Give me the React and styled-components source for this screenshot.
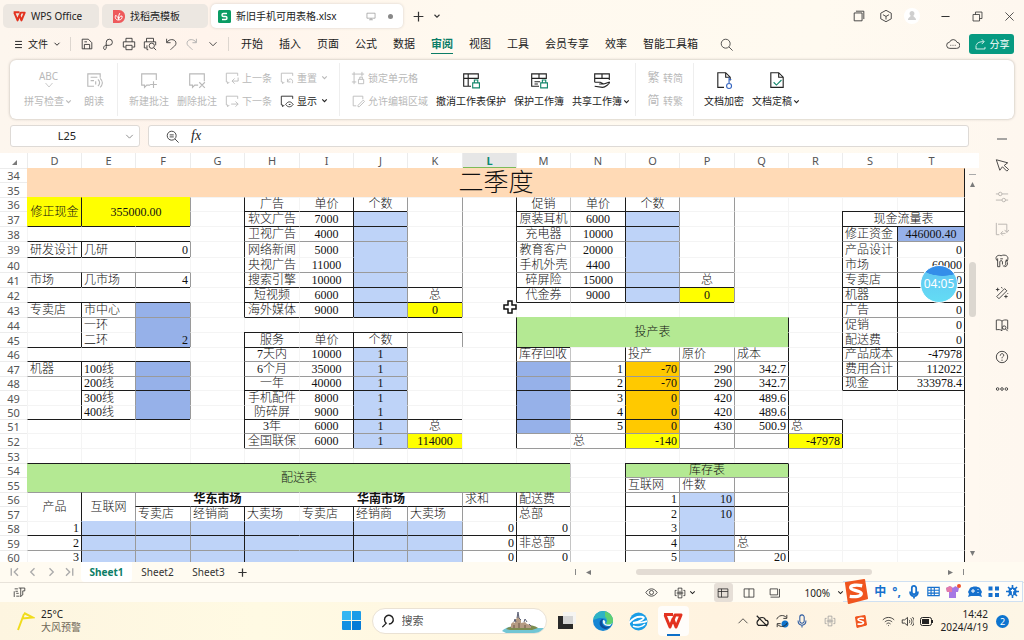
import React from "react";
import styled, { createGlobalStyle } from "styled-components";

const DARK = "#1c1c1c";
const GREY = "#9a9a9a";
const FAINT = "#f4f4f4";
const YELLOW = "#ffff00";
const SKY = "#bed3f8";
const BLUE = "#96b1e9";
const GREEN = "#b4e993";
const ORANGE = "#ffc900";
const PEACH = "#ffdab6";

/* ---------- sheet data ---------- */

const columns = [
  ["D", 54], ["E", 54], ["F", 55], ["G", 54], ["H", 55], ["I", 54],
  ["J", 54], ["K", 55], ["L", 54], ["M", 54], ["N", 55], ["O", 54],
  ["P", 55], ["Q", 54], ["R", 54], ["S", 55], ["T", 68],
];

const rowHeights = [
  14, 15, 14, 15, 15, 16, 15, 15, 15, 15, 15, 15, 14, 15,
  14, 15, 14, 14, 15, 15, 14, 15, 14, 15, 14, 15, 14,
];

const FIRST_ROW = 34;

// ink used for the top line of a row / the left line of a column inside a box
const rowInk = {
  37: DARK, 38: DARK, 39: GREY, 41: GREY, 42: DARK, 43: DARK, 44: GREY,
  46: DARK, 47: GREY, 48: GREY, 49: DARK, 51: DARK, 52: GREY, 53: GREY,
  54: DARK, 55: GREY, 56: GREY, 57: DARK, 59: DARK, 60: GREY,
};
const colInk = {
  E: DARK, F: GREY, G: GREY, H: DARK, J: DARK, K: GREY, L: GREY, M: DARK,
  N: "#c4c4c4", O: DARK, P: GREY, Q: GREY, R: DARK, S: DARK, T: DARK,
};

const boxes = [
  "D36:F37", "D39:F39", "D41:F41", "D43:F45", "D47:F50", "H36:J43",
  "K42:K43", "H45:J52", "K51:K52", "M36:O42", "P41:P42", "M44:Q52",
  "R51:R52", "S37:T48", "D54:M55", "D56:M60", "O54:Q60",
];

const topLines = [
  ["D39:F40", DARK], ["D47:F47", DARK], ["D49:D49", null],
  ["H44:K44", DARK], ["H45:K45", DARK], ["M44:Q44", null], ["N46:Q46", null],
];
const leftLines = [
  ["L36:L41", GREY], ["L45:L45", GREY], ["L51:L52", null],
  ["Q36:Q40", GREY], ["N52:N52", null],
];

const fills = [
  ["D34:T35", PEACH], ["D36:F37", YELLOW], ["F43:F45", BLUE],
  ["F47:F50", BLUE], ["J37:J43", SKY], ["K43:K43", YELLOW],
  ["J46:J52", SKY], ["K52:K52", YELLOW], ["O37:O42", SKY],
  ["P42:P42", YELLOW], ["M44:Q45", GREEN], ["M47:M51", BLUE],
  ["O47:O51", ORANGE], ["O52:O52", YELLOW], ["R52:R52", YELLOW],
  ["T38:T38", BLUE], ["D54:M55", GREEN], ["E58:K60", SKY],
  ["O54:Q54", GREEN], ["P56:P60", SKY],
];

const merges = [
  "D34:T35", "D36:D37", "E36:F37", "S37:T37", "M44:Q45", "D54:M55",
  "D56:D57", "E56:E57", "F56:H56", "I56:K56", "O54:Q54",
];

const centered = ["H36:K52", "M36:P42", "T38:T38"];
const bold = ["F56:K56"];

// each block is written from its top left cell
const blocks = {
  D34: [["二季度"]],
  D36: [["修正现金", "355000.00"]],
  D39: [["研发设计", "几研", "0"]],
  D41: [["市场", "几市场", "4"]],
  D43: [["专卖店", "市中心"], ["", "一环"], ["", "二环", "2"]],
  D47: [["机器", "100线"], ["", "200线"], ["", "300线"], ["", "400线"]],
  H36: [
    ["广告", "单价", "个数"],
    ["软文广告", "7000"],
    ["卫视广告", "4000"],
    ["网络新闻", "5000"],
    ["央视广告", "11000"],
    ["搜索引擎", "10000"],
    ["短视频", "6000", "", "总"],
    ["海外媒体", "9000", "", "0"],
  ],
  H45: [
    ["服务", "单价", "个数"],
    ["7天内", "10000", "1"],
    ["6个月", "35000", "1"],
    ["一年", "40000", "1"],
    ["手机配件", "8000", "1"],
    ["防碎屏", "9000", "1"],
    ["3年", "6000", "1", "总"],
    ["全国联保", "6000", "1", "114000"],
  ],
  M36: [
    ["促销", "单价", "个数"],
    ["原装耳机", "6000"],
    ["充电器", "10000"],
    ["教育客户", "20000"],
    ["手机外壳", "4400"],
    ["碎屏险", "15000", "", "总"],
    ["代金券", "9000", "", "0"],
  ],
  M44: [["投产表"]],
  M46: [
    ["库存回收", "", "投产", "原价", "成本"],
    ["", "1", "-70", "290", "342.7"],
    ["", "2", "-70", "290", "342.7"],
    ["", "3", "0", "420", "489.6"],
    ["", "4", "0", "420", "489.6"],
    ["", "5", "0", "430", "500.9", "总"],
    ["", "总", "-140", "", "", "-47978"],
  ],
  S37: [
    ["现金流量表"],
    ["修正资金", "446000.40"],
    ["产品设计", "0"],
    ["市场", "60000"],
    ["专卖店", "0"],
    ["机器", "0"],
    ["广告", "0"],
    ["促销", "0"],
    ["配送费", "0"],
    ["产品成本", "-47978"],
    ["费用合计", "112022"],
    ["现金", "333978.4"],
  ],
  D54: [["配送表"]],
  D56: [
    ["产品", "互联网", "华东市场", "", "", "华南市场", "", "", "求和", "配送费"],
    ["", "", "专卖店", "经销商", "大卖场", "专卖店", "经销商", "大卖场", "", "总部"],
    ["1", "", "", "", "", "", "", "", "0", "0"],
    ["2", "", "", "", "", "", "", "", "0", "非总部"],
    ["3", "", "", "", "", "", "", "", "0", "0"],
  ],
  O54: [
    ["库存表"],
    ["互联网", "件数"],
    ["1", "10"],
    ["2", "10"],
    ["3"],
    ["4", "", "总"],
    ["5", "", "20"],
  ],
};

const parseRef = ref => [ref.charCodeAt(0) - 68, Number(ref.slice(1))];
const parseRange = range => {
  const [c1, r1] = parseRef(range.slice(0, 3));
  const [c2, r2] = parseRef(range.slice(4));
  return { c1, r1, c2, r2 };
};

const buildSheet = () => {
  const cells = {};
  const at = (c, r) => (cells[`${c}-${r}`] = cells[`${c}-${r}`] || {});
  const each = (range, fn) => {
    const { c1, r1, c2, r2 } = parseRange(range);
    for (let r = r1; r <= r2; r++) {
      for (let c = c1; c <= c2; c++) fn(at(c, r), c, r);
    }
  };

  boxes.forEach(range => {
    const { c1, r1, c2, r2 } = parseRange(range);
    for (let c = c1; c <= c2; c++) {
      for (let r = r1; r <= r2 + 1; r++) at(c, r).top = rowInk[r];
    }
    for (let r = r1; r <= r2; r++) {
      for (let c = c1; c <= c2 + 1; c++) {
        at(c, r).left = colInk[String.fromCharCode(68 + c)];
      }
    }
  });
  topLines.forEach(([range, ink]) => each(range, cell => (cell.top = ink)));
  leftLines.forEach(([range, ink]) => each(range, cell => (cell.left = ink)));
  fills.forEach(([range, fill]) => each(range, cell => (cell.fill = fill)));
  centered.forEach(range => each(range, cell => (cell.align = "center")));
  bold.forEach(range => each(range, cell => (cell.bold = true)));

  Object.entries(blocks).forEach(([ref, rows]) => {
    const [c, r] = parseRef(ref);
    rows.forEach((row, i) =>
      row.forEach((text, j) => (at(c + j, r + i).text = text))
    );
  });

  merges.forEach(range => {
    const { c1, r1, c2, r2 } = parseRange(range);
    each(range, (cell, c, r) => {
      if (c !== c1 || r !== r1) cell.hidden = true;
    });
    Object.assign(at(c1, r1), {
      colSpan: c2 - c1 + 1,
      rowSpan: r2 - r1 + 1,
      align: "center",
      merged: true,
    });
  });
  return at;
};

const cellAt = buildSheet();

/* ---------- icons ---------- */

const Glyph = ({ d, size = 16, color = "currentColor", accent, accentColor = "#14876c", weight = 1 }) => (
  <svg width={size} height={size} viewBox="0 0 16 16" fill="none" stroke={color} strokeWidth={weight} aria-hidden="true">
    <path d={d} />
    {accent && <path d={accent} stroke={accentColor} />}
  </svg>
);

const icons = {
  menu: "M3 3.500h10M3 8h10M3 12.500h10",
  down: "M4 6l4 4 4-4",
  up: "M2 11l6-6 6 6",
  save: "M2.500 13.500v-11h7l4 4v7zM5 13.500v-5h6v5M5 5.500h3",
  link: "M4.500 14.500c-3-1-1-5 1-5h4a3.500 3.500 0 1 0-3.500-3.500v5a3 3 0 0 1-1.500 3.500",
  print: "M4.500 5.500v-4h7v4M4 11.500H1.500v-6h13v6H12M4.500 9.500h7v5h-7z",
  preview: "M4 5.500v-4h8v4M4 12.500H1.500v-7h13v4M6 14.500H4.500v-5M10 13a3 3 0 1 0 0-6 3 3 0 0 0 0 6M12.500 12.500l2.500 2.500",
  undo: "M3 2v4.500h4.500M3.500 6c2-4 9-4 10 0 1 4-3 5-6 8.500",
  redo: "M13 2v4.500H8.500M12.500 6c-2-4-9-4-10 0-1 4 3 5 6 8.500",
  search: "M7 12.500a5.500 5.500 0 1 0 0-11 5.500 5.500 0 0 0 0 11M11 11l4.500 4.500",
  zoomOut: "M7 12.500a5.500 5.500 0 1 0 0-11 5.500 5.500 0 0 0 0 11M11 11l4.500 4.500M4.500 6h5M4.500 8.500h5",
  plus: "M8 2v12M2 8h12",
  minus: "M3 8h10",
  close: "M3 3l10 10M13 3L3 13",
  monitor: "M1.500 3.500h13v8h-13zM5 14h6M8 11.500V14",
  windows: "M2.500 4.500h9v9h-9zM4.500 2.500h9v9",
  restore: "M2.500 5.500h8v8h-8zM5.500 5.500v-3h8v8h-3",
  cube: "M8 1.500l6 3.300v6.400l-6 3.300-6-3.300V4.800zM4.500 6.500L8 8.500l3.500-2M8 8.500V12",
  cloud: "M4.500 13a3.500 3.500 0 0 1-.5-7 4.500 4.500 0 0 1 8.500 0 3.500 3.500 0 0 1-.5 7zM5 9.500h1M7.500 9.500h1M10 9.500h1",
  share: "M2.500 9v4.500h11V11M3 8.500c1-3 4-4 9-4M9.500 1.500l3 3-3 3",
  check: "M1 4l7 8 7-8",
  read: "M13.500 6V2.500h-11v11H8M5 5.500h6M5 8.500h3M9.500 9v3M11.500 7.500c2 2 2 4 0 6M13.500 6.500c3 3 2 6 0 8",
  noteNew: "M9 12.500H6l-2 2v-2H1.500v-10h13V8M12 9v6M9 12h6",
  noteDel: "M9 12.500H6l-2 2v-2H1.500v-10h13V9M10 10l5 5M15 10l-5 5",
  notePrev: "M5 12.500l-2 2v-2H1.500v-10h13v3M15 7.500v4H8M11 8.500l-3 3 3 3",
  noteNext: "M5 12.500l-2 2v-2H1.500v-10h13v3M7 11.500h8M12 8.500l3 3-3 3",
  noteReset: "M5 12.500l-2 2v-2H1.500v-10h13v3M9 12c1-5 7-3 5 2M8.500 9v3.500H12",
  noteShow: "M5 12.500l-2 2v-2H1.500v-10h13v3M6.500 12c2.500-4 6-4 8.500 0-2.500 3.500-6 3.500-8.500 0M10 12h2",
  lockCell: "M3.500 1v14M1 3.500h14M12.500 1v5M1 12.500h5M8.500 9.500h6v5h-6zM10 9.500V7h3v2.500",
  editArea: "M6 13.500H2.500v-11h11V6M8 13l6-6 1.500 1.500-6 6H8z",
  tableLock: "M8 13.500H1.500v-11h13V7M1.500 6.500h13M5.500 2.500v11",
  bookLock: "M8 13.500H1.500v-11h13V7M1.500 6.500h13M8 2.500v4M4 9.500h5M4 11.500h3",
  lock: "M9.500 10.500h6v4.500h-6zM11 10.500V8h3v2.500",
  hand: "M1.500 10V2.500h13V8M1.500 6.500h13M8 2.500v4M1.500 10h5l3 1.500h-4M9.500 11.500l5-1.500c1 1-4 4.500-6 4.500l-7-1",
  doc: "M8 14.500H2.500v-13h7l4 4v3M9.500 1.500v4h4",
  docFull: "M2.500 1.500h7l4 4v9h-11zM9.500 1.500v4h4",
  key: "M12.500 11V5.500M12.500 7.500h2M12.500 15.500a2.200 2.200 0 1 0 0-4.400 2.200 2.200 0 0 0 0 4.400",
  pointer: "M1.500 2l13 3.500-4 3 5 4.500-2 2-5-5-3 4z",
  sliders: "M1 4.500h3M8 4.500h7M6 6.500a2 2 0 1 0 0-4 2 2 0 0 0 0 4M1 11.500h7M12 11.500h3M10 13.500a2 2 0 1 0 0-4 2 2 0 0 0 0 4",
  flow: "M1.500 1v13.500H5M3.500 2.500h10v9M11 9l2.500 3L16 9M9 10.500L6.500 13 9 15.500M7 13h5",
  palette: "M3 8C-1 5 2 0 7 2c4-2 10 0 7 6M3 5v9.500h2.500V9c0-2 3-2 3 0v3M6 5.500h3M9 13.500c2 1 4-1 3-4l1-3 1 3c1 3-1 5-3 5",
  wand: "M2 12L11 3l2.500 2.500-9 9zM3 2v4M1 4h4M12.500 10v4M10.500 12h4M7 1.500l1.500 1M14 8l1 1",
  book: "M8 3.500C6 2 4 2 1.500 2.500v11C4 13 6 13 8 14.500V3.500c2-1.500 4-1.500 6.500-1V8M10.500 13a2 2 0 1 0 0-4 2 2 0 0 0 0 4M12 12.500l2.500 2.500M14.500 8v5",
  help: "M8 14.500a6.500 6.500 0 1 0 0-13 6.500 6.500 0 0 0 0 13M6 6.500c0-3 4-3 4-.5 0 1.500-2 1.500-2 3.500M8 11v1.500",
  dots: "M3 9.500a1.500 1.500 0 1 0 0-3 1.500 1.500 0 0 0 0 3M8 9.500a1.500 1.500 0 1 0 0-3 1.500 1.500 0 0 0 0 3M13 9.500a1.500 1.500 0 1 0 0-3 1.500 1.500 0 0 0 0 3",
  first: "M3 3v10M12 3L7 8l5 5",
  prev: "M10 3L5 8l5 5",
  next: "M6 3l5 5-5 5",
  last: "M13 3v10M4 3l5 5-5 5",
  eye: "M1 8c4-6 10-6 14 0-4 6-10 6-14 0M8 10.500a2.500 2.500 0 1 0 0-5 2.500 2.500 0 0 0 0 5",
  cross: "M5.500 1.500h5v13h-5zM8 5v6M3.500 8h9M3.500 4.500h-2v7h2M12.500 4.500h2v7h-2",
  grid: "M1.500 2.500h13v11h-13zM1.500 6h13M6 2.500v11",
  pages: "M1.500 2.500h13v11h-13zM8 2.500v11",
  layout: "M1.500 2.500h10v8h-10zM14 2.500v11H2",
  macro: "M2 3.500h4M3 6.500h3M1.500 6.500v7M4 9h3M4 12.500h4M7 2.500h7.500v3.500H12v5l-3 2M9.500 2.500V13",
  cloudOff: "M4 13a3.500 3.500 0 0 1 0-6c1-4 7-4 8 0a3 3 0 0 1 0 6zM2 2l12 12",
  sync: "M2 6a6.500 6.500 0 0 1 11-2M13.500 1v4h-4M14 10a6.500 6.500 0 0 1-11 2M2.500 15v-4h4",
  mic: "M8 10.500A2.500 2.500 0 0 0 10.500 8V3.500a2.500 2.500 0 0 0-5 0V8A2.500 2.500 0 0 0 8 10.500M3.500 7.500c0 7 9 7 9 0M8 13v2.500",
  wifi: "M1 6c4-4 10-4 14 0M3.500 8.500c3-2.500 6-2.500 9 0M5.500 11c2-1.500 3-1.500 5 0M7.500 13h1",
  volume: "M1.500 6v4h3l3.500 3V3L4.500 6zM10 6c1 1 1 3 0 4M12 4c2 2 2 6 0 8M14 2.500c3 3 3 8 0 11",
};

const SheetMark = () => (
  <svg width="13" height="13" viewBox="0 0 13 13" aria-hidden="true">
    <rect width="13" height="13" rx="1.500" fill="#0a9c64" />
    <path d="M9 3.500H5.500c-2 0-2 3 0 3h2c2 0 2 3 0 3H4" fill="none" stroke="#fff" strokeWidth="1.400" />
  </svg>
);

const WpsMark = ({ size = 13 }) => (
  <svg width={size} height={size} viewBox="0 0 20 18" aria-hidden="true">
    <path d="M1 2.500h9M2 3l5 12 3-8 3 8 5-12h-6l-1.500 4" fill="none" stroke="#e3321f" strokeWidth="3" strokeLinejoin="round" />
  </svg>
);

const DocerMark = () => (
  <svg width="13" height="13" viewBox="0 0 13 13" aria-hidden="true">
    <path d="M1 0h6a6 6 0 0 1 6 6.500A6 6 0 0 1 7 13H1z" fill="#ee5a5c" />
    <path d="M6.500 10C3 10 3 7 3.500 5.500 5 6 6 7 6.500 9 6.500 6 7 4 8 3M6.500 10c3 0 4-2 3.500-4-2 0-3 1-3.500 4" fill="none" stroke="#fff" />
  </svg>
);

const SogouMark = ({ size }) => (
  <svg width={size} height={size} viewBox="0 0 26 26" aria-hidden="true">
    <path d="M3 4L22 1l3 19-19 5z" fill="#f0551f" stroke="#f0551f" strokeWidth="2" strokeLinejoin="round" />
    <path d="M20 7c-5-1-12-1-12 2s11 3 11 6-6 4-12 3" fill="none" stroke="#fff" strokeWidth="3.500" />
  </svg>
);

const FlagMark = () => (
  <svg width="18" height="20" viewBox="0 0 18 20" fill="none" stroke="#f0dc1c" strokeWidth="2" aria-hidden="true">
    <path d="M1 19L7 3M7 2l9 4.500L5 7.500" />
  </svg>
);

const WindowsMark = () => (
  <svg width="20" height="20" viewBox="0 0 20 20" aria-hidden="true">
    <path d="M0 1a1 1 0 0 1 1-1h8v9H0z" fill="#35b6f2" />
    <path d="M10 0h8a1 1 0 0 1 1 1v8h-9z" fill="#1c9ce8" />
    <path d="M0 10h9v9H1a1 1 0 0 1-1-1z" fill="#1390e2" />
    <path d="M10 10h9v8a1 1 0 0 1-1 1h-8z" fill="#067bd6" />
  </svg>
);

const CastleArt = () => (
  <svg width="44" height="24" viewBox="0 0 44 24" aria-hidden="true">
    <path d="M0 22c6-6 12-4 18-3h26c0 3-3 5-8 5H4z" fill="#72c6d4" />
    <path d="M4 20c6-5 26-6 32-1l-6 2H8z" fill="#7c8b4e" />
    <path d="M9 19v-4l2-2 2 1v-3l2-2 1-4 1 4 2 2v3l4-1 2 2 4 1v3z" fill="#b59b83" />
    <path d="M12 13l1-3 1 3M15 9l1-6 1 6 2 2M22 13l1-3 2 3M27 15l2 2" stroke="#5d6276" fill="none" />
    <path d="M12 16v3M17 14v5M23 16v3" stroke="#6b5648" />
  </svg>
);

const TaskViewMark = () => (
  <svg width="20" height="18" viewBox="0 0 20 18" aria-hidden="true">
    <rect x="1" y="4" width="15" height="13" fill="#292929" />
    <rect x="6" y="0" width="13" height="12" fill="#f4f4f4" opacity="0.850" />
  </svg>
);

const EdgeMark = () => (
  <svg width="20" height="20" viewBox="0 0 20 20" aria-hidden="true">
    <circle cx="10" cy="10" r="10" fill="#1686d4" />
    <path d="M0 10a10 10 0 0 1 20 0c0 4-6 5-7 3 2-3 0-6-4-6-5 0-9 2-9 3" fill="#2fb3c4" />
    <path d="M12 0.500c5 1 8 5 8 9 0 5-6 5-7 3 2-3 1-5-1-7z" fill="#5fd070" />
    <path d="M9 8c-4 2-3 9 3 10 2 0 4-1 6-3-5 2-9 0-9-4 0-1 1-3 2-3z" fill="#0d4f9c" />
    <path d="M10 9c-1 4 2 6 7 6l2-3c-2 2-6 2-7 0 1-1 0-3-2-3" fill="#eaf7f7" />
  </svg>
);

const BrowserMark = () => (
  <svg width="19" height="19" viewBox="0 0 19 19" aria-hidden="true">
    <circle cx="9.500" cy="9.500" r="9" fill="#1a9de6" />
    <path d="M0 11C4 6 9 4 14 5c3 1-3 5-10 6 5 0 10 0 14-2" stroke="#fff" strokeWidth="1.800" fill="none" />
    <path d="M4 14c4 2 9 1 12-2" stroke="#fff" strokeWidth="1.500" fill="none" />
  </svg>
);

const Arrow = ({ d }) => (
  <svg width="5" height="5" viewBox="0 0 6 6" fill="#7a7a7a" aria-hidden="true">
    <path d={d} />
  </svg>
);

/* ---------- page ---------- */

const App = () => (
  <Screen>
    <GlobalStyle />
    <TitleBar>
      <FileTab $width={96}>
        <WpsMark />
        WPS Office
      </FileTab>
      <FileTab $width={106}>
        <DocerMark />
        找稻壳模板
      </FileTab>
      <FileTab $width={192} $active>
        <SheetMark />
        新旧手机可用表格.xlsx
        <TabState>
          <Glyph d={icons.monitor} size={10} color="#888" />
          <Dot />
        </TabState>
      </FileTab>
      <IconButton $width={24} aria-label="新建"><Glyph d={icons.plus} size={13} weight={1.5} /></IconButton>
      <IconButton $width={8} aria-label="更多标签"><Glyph d={icons.down} size={10} weight={1.8} /></IconButton>
      <Spacer />
      <IconButton $width={24} aria-label="窗口"><Glyph d={icons.windows} size={14} /></IconButton>
      <IconButton $width={24} aria-label="应用"><Glyph d={icons.cube} size={14} /></IconButton>
      <Avatar aria-label="账号">
        <svg width="16" height="16" viewBox="0 0 16 16" fill="#cfcfcf" aria-hidden="true">
          <path d="M8 3a2.500 2.500 0 0 1 1.500 4.500C9 9 12 9 12 12H4c0-3 3-3 2.500-4.500A2.500 2.500 0 0 1 8 3" />
        </svg>
      </Avatar>
      <IconButton $width={29} aria-label="最小化"><Glyph d={icons.minus} size={13} weight={1.3} /></IconButton>
      <IconButton $width={29} aria-label="还原"><Glyph d={icons.restore} size={13} /></IconButton>
      <IconButton $width={29} aria-label="关闭"><Glyph d={icons.close} size={13} /></IconButton>
    </TitleBar>

    <MenuBar>
      <FileMenu>
        <Glyph d={icons.menu} size={11} weight={1.4} />
        文件
        <Glyph d={icons.down} size={10} weight={1.5} />
      </FileMenu>
      <QuickTools>
        {["save", "link", "print", "preview", "undo", "redo", "down"].map(name => (
          <IconButton key={name} $width={21} $dim={name === "redo"} aria-label={name}>
            <Glyph d={icons[name]} size={14} />
          </IconButton>
        ))}
      </QuickTools>
      <MenuItems>
        {["开始", "插入", "页面", "公式", "数据", "审阅", "视图", "工具", "会员专享", "效率", "智能工具箱"].map(item => (
          <MenuItem key={item} $active={item === "审阅"}>{item}</MenuItem>
        ))}
      </MenuItems>
      <IconButton $width={56} aria-label="搜索"><Glyph d={icons.search} size={13} /></IconButton>
      <Spacer />
      <IconButton $width={32} aria-label="评论"><Glyph d={icons.cloud} size={14} /></IconButton>
      <ShareButton>
        <Glyph d={icons.share} size={13} />
        分享
      </ShareButton>
    </MenuBar>

    <Ribbon>
      <RibbonGroup $left={14} $right={13}>
        <BigTool $dim>
          <Abc>ABC<Glyph d={icons.check} size={8} weight={1.5} /></Abc>
          <ToolLabel>拼写检查<Caret /></ToolLabel>
        </BigTool>
        <BigTool $dim>
          <Glyph d={icons.read} size={18} />
          <ToolLabel>朗读</ToolLabel>
        </BigTool>
      </RibbonGroup>
      <RibbonGroup $left={11} $right={10}>
        <BigTool $dim>
          <Glyph d={icons.noteNew} size={18} />
          <ToolLabel>新建批注</ToolLabel>
        </BigTool>
        <BigTool $dim>
          <Glyph d={icons.noteDel} size={18} />
          <ToolLabel>删除批注</ToolLabel>
        </BigTool>
        <ToolStack>
          <SmallTool $dim><Glyph d={icons.notePrev} size={14} />上一条</SmallTool>
          <SmallTool $dim><Glyph d={icons.noteNext} size={14} />下一条</SmallTool>
        </ToolStack>
        <ToolStack>
          <SmallTool $dim><Glyph d={icons.noteReset} size={14} />重置<Caret /></SmallTool>
          <SmallTool><Glyph d={icons.noteShow} size={14} />显示<Caret /></SmallTool>
        </ToolStack>
      </RibbonGroup>
      <RibbonGroup $left={11} $right={4}>
        <ToolStack>
          <SmallTool $dim><Glyph d={icons.lockCell} size={14} />锁定单元格</SmallTool>
          <SmallTool $dim><Glyph d={icons.editArea} size={14} />允许编辑区域</SmallTool>
        </ToolStack>
        <BigTool>
          <Glyph d={icons.tableLock} accent={icons.lock} size={18} />
          <ToolLabel>撤消工作表保护</ToolLabel>
        </BigTool>
        <BigTool>
          <Glyph d={icons.bookLock} accent={icons.lock} size={18} />
          <ToolLabel>保护工作簿</ToolLabel>
        </BigTool>
        <BigTool>
          <Glyph d={icons.hand} size={18} />
          <ToolLabel>共享工作簿<Caret /></ToolLabel>
        </BigTool>
      </RibbonGroup>
      <RibbonGroup $left={11} $right={10}>
        <ToolStack>
          <SmallTool $dim><Hanzi>繁</Hanzi>转简</SmallTool>
          <SmallTool $dim><Hanzi>简</Hanzi>转繁</SmallTool>
        </ToolStack>
      </RibbonGroup>
      <RibbonGroup $left={10} $right={10}>
        <BigTool>
          <Glyph d={icons.doc} accent={icons.key} accentColor="#3565c0" size={18} />
          <ToolLabel>文档加密</ToolLabel>
        </BigTool>
        <BigTool>
          <Glyph d={icons.docFull} accent="M5 10l2.500 2.500L12 8" size={18} />
          <ToolLabel>文档定稿<Caret /></ToolLabel>
        </BigTool>
      </RibbonGroup>
    </Ribbon>

    <Workspace>
      <Editor>
        <FormulaRow>
          <NameBox>
            <NameInput aria-label="名称框" defaultValue="L25" />
            <Glyph d={icons.down} size={13} color="#777" />
          </NameBox>
          <FormulaBox>
            <Glyph d={icons.zoomOut} size={13} />
            <Fx>fx</Fx>
            <FormulaInput aria-label="编辑栏" />
          </FormulaBox>
        </FormulaRow>
        <SheetArea>
          <Sheet>
            <colgroup>
              <Col $width={27} />
              {columns.map(([name, width]) => <Col key={name} $width={width} />)}
            </colgroup>
            <thead>
              <tr>
                <Corner><Arrow d="M6 0v6H0z" /></Corner>
                {columns.map(([name]) => (
                  <ColHead key={name} scope="col" $active={name === "L"}>{name}</ColHead>
                ))}
              </tr>
            </thead>
            <tbody>
              {rowHeights.map((height, i) => {
                const row = FIRST_ROW + i;
                return (
                  <Row key={row} $height={height}>
                    <RowHead scope="row">{row}</RowHead>
                    {columns.map(([name], c) => {
                      const cell = cellAt(c, row);
                      if (cell.hidden) return null;
                      const numeric = /^-?[\d.]+$/.test(cell.text || "");
                      return (
                        <Cell
                          key={name}
                          colSpan={cell.colSpan}
                          rowSpan={cell.rowSpan}
                          $top={cell.top}
                          $left={cell.left}
                          $fill={cell.fill}
                          $bold={cell.bold}
                          $merged={cell.merged}
                          $title={cell.fill === PEACH}
                          $align={cell.align || (numeric ? "right" : "left")}
                          $end={name === "T" || cell.fill === PEACH || cell.text === "现金流量表"}
                        >
                          {cell.text}
                        </Cell>
                      );
                    })}
                  </Row>
                );
              })}
            </tbody>
          </Sheet>
          <VScroll>
            <Tick />
            <Arrow d="M0 6l3-6 3 6z" />
            <VThumb />
            <Arrow d="M0 0l3 6 3-6z" />
          </VScroll>
        </SheetArea>
      </Editor>
      <SideBar>
        <SideButton aria-label="收起"><Glyph d={icons.minus} size={16} color="#888" weight={1.5} /></SideButton>
        {["pointer", "sliders", "flow", "palette", "wand", "book", "help", "dots"].map(name => (
          <SideButton key={name} $dim={name === "sliders" || name === "flow"} aria-label={name}>
            <Glyph d={icons[name]} size={14} />
          </SideButton>
        ))}
      </SideBar>
    </Workspace>

    <SheetTabs>
      <SheetNav>
        {["first", "prev", "next", "last"].map(name => (
          <IconButton key={name} $width={18} $dim aria-label={name}>
            <Glyph d={icons[name]} size={12} weight={1.8} />
          </IconButton>
        ))}
      </SheetNav>
      <SheetTab $active>Sheet1</SheetTab>
      <SheetTab>Sheet2</SheetTab>
      <SheetTab>Sheet3</SheetTab>
      <IconButton $width={16} aria-label="新建工作表"><Glyph d={icons.plus} size={11} weight={1.8} /></IconButton>
      <Spacer />
      <HScroll>
        <Bar />
        <Arrow d="M6 0L0 3l6 3z" />
        <HTrack><HThumb /></HTrack>
        <Arrow d="M0 0l6 3-6 3z" />
        <Bar />
      </HScroll>
    </SheetTabs>

    <StatusBar>
      <IconButton $width={14} aria-label="宏"><Glyph d={icons.macro} size={13} /></IconButton>
      <Spacer />
      <IconButton $width={24} aria-label="护眼"><Glyph d={icons.eye} size={13} /></IconButton>
      <ReadButton aria-label="阅读">
        <Glyph d={icons.cross} size={12} />
        <Glyph d={icons.down} size={9} weight={1.8} />
      </ReadButton>
      <ViewButton $active aria-label="普通视图"><Glyph d={icons.grid} size={12} /></ViewButton>
      <ViewButton aria-label="页面布局"><Glyph d={icons.pages} size={12} /></ViewButton>
      <ViewButton aria-label="分页预览"><Glyph d={icons.layout} size={12} /></ViewButton>
      <ZoomButton>100%<Glyph d={icons.down} size={9} weight={1.8} /></ZoomButton>
    </StatusBar>

    <TaskBar>
      <Weather>
        <FlagMark />
        <div>25°C<br /><Muted>大风预警</Muted></div>
      </Weather>
      <Dock>
        <WindowsMark />
        <SearchPill>
          <Glyph d="M9 11.500a5 5 0 1 0-3-1L1.500 15" size={14} weight={1.6} />
          <SearchInput aria-label="搜索" placeholder="搜索" />
          <CastleArt />
        </SearchPill>
        <DockIcons>
          <TaskViewMark />
          <EdgeMark />
          <BrowserMark />
        </DockIcons>
        <RunningApp aria-label="WPS"><WpsMark size={20} /></RunningApp>
      </Dock>
      <Tray>
        <TrayGroup>
          <Glyph d={icons.up} size={12} />
          <Glyph d={icons.cloudOff} size={14} weight={1.4} />
          <SyncIcon><Glyph d={icons.sync} size={14} /></SyncIcon>
          <Glyph d={icons.mic} size={14} color="#2c5aa0" weight={1.2} />
        </TrayGroup>
        <TrayGroup><Glyph d={icons.cross} size={12} color="#999" /></TrayGroup>
        <TrayGroup><SogouMark size={13} /></TrayGroup>
        <TrayGroup>
          <Glyph d={icons.wifi} size={13} />
          <Glyph d={icons.volume} size={13} />
          <svg width="13" height="9" viewBox="0 0 13 9" aria-hidden="true">
            <rect x="0.500" y="0.500" width="11" height="8" rx="2" fill="none" stroke="#222" />
            <rect x="2" y="2" width="7" height="5" fill="#222" />
            <path d="M12.500 3v3" stroke="#222" />
          </svg>
        </TrayGroup>
        <Clock>14:42<br />2024/4/19</Clock>
        <Badge>2</Badge>
      </Tray>
    </TaskBar>

    <InputMethod>
      <SogouMark size={25} />
      <b>中</b>
      <b>°,</b>
      <Glyph d={icons.mic} size={14} weight={2} />
      <Glyph d="M1 3h14v10H1zM1 6.500h14M1 10h14M5 3v10M9 3v10" size={13} weight={1.4} />
      <svg width="15" height="15" viewBox="0 0 15 15" aria-hidden="true">
        <path d="M0 4l4-2c1 2 4 2 5 0l4 2-1 4h-2v6H3V8H1z" fill="#a678e4" />
        <path d="M0 4l4-2 2 1v5H1z" fill="#e47aa8" />
        <circle cx="13" cy="2" r="2" fill="#f0532d" />
      </svg>
      <svg width="14" height="14" viewBox="0 0 14 14" aria-hidden="true">
        <path d="M2 3c3-2 7-2 10 0l2 4-1 2 1 3-3-1H3l-3 1 1-3-1-2z" fill="#1670cd" />
        <path d="M3 6h4M5 4v4M10 4v1M10 7v1" stroke="#fff" />
      </svg>
      <svg width="12" height="12" viewBox="0 0 12 12" fill="none" stroke="#1670cd" strokeWidth="2" aria-hidden="true">
        <path d="M1.500 1.500h2v2h-2zM8 1.500h2v2H8zM1.500 8h2v2h-2zM8 8h2v2H8z" />
      </svg>
      <svg width="13" height="13" viewBox="0 0 16 16" aria-hidden="true">
        <path d="M8 0v16M0 8h16M2.500 2.500l11 11M13.500 2.500l-11 11" stroke="#1670cd" strokeWidth="2" />
        <circle cx="8" cy="8" r="5" fill="#1670cd" />
        <path d="M8 5v7M6 7h4" stroke="#fff" strokeWidth="1.500" />
      </svg>
    </InputMethod>

    <Timer>04:05</Timer>
    <CellCursor width="14" height="14" viewBox="0 0 14 14" aria-hidden="true">
      <path d="M5 1h4v4h4v4H9v4H5V9H1V5h4z" fill="#fff" stroke="#111" strokeWidth="1.500" />
    </CellCursor>
  </Screen>
);

const GlobalStyle = createGlobalStyle`
  * {
    box-sizing: border-box;
  }

  body {
    margin: 0;
    color: #222;
    font: 11px/14px "Noto Sans", "Noto Sans CJK SC", sans-serif;
  }

  button, input {
    margin: 0;
    padding: 0;
    border: 0;
    outline: 0;
    background: none;
    color: inherit;
    font: inherit;
  }

  svg {
    flex: none;
  }
`;

const Screen = styled.div`
  position: relative;
  display: flex;
  flex-direction: column;
  height: 100vh;
  overflow: hidden;
  background: linear-gradient(90deg, #fdf6ee, #fff4ec 20%, #fff9ef 45%, #fffaf0 80%, #fef7ef);
`;

const Spacer = styled.div`
  flex: 1;
`;

const TitleBar = styled.header`
  display: flex;
  align-items: center;
  gap: 3px;
  height: 32px;
  padding: 0 0 0 3px;
`;

const FileTab = styled.button`
  display: flex;
  align-items: center;
  gap: 5px;
  width: ${props => props.$width}px;
  height: 24px;
  padding: 0 10px;
  padding-left: ${props => (props.$active ? 7 : 10)}px;
  border-radius: 5px;
  white-space: nowrap;
  font-size: 10px;
  background: ${props => (props.$active ? "#fff" : "#ece7e1")};
  box-shadow: ${props => (props.$active ? "0 0 3px #d6cfc8" : "none")};
`;

const TabState = styled.span`
  display: flex;
  align-items: center;
  gap: 12px;
  margin-left: auto;
`;

const Dot = styled.span`
  width: 5px;
  height: 5px;
  border-radius: 50%;
  background: #888;
`;

const IconButton = styled.button`
  display: flex;
  align-items: center;
  justify-content: center;
  flex: none;
  width: ${props => props.$width}px;
  color: ${props => (props.$dim ? "#aaa" : "#333")};
`;

const Avatar = styled.button`
  display: flex;
  width: 16px;
  margin: 0 8px 0 3px;
  border-radius: 50%;
  background: #fff;
`;

const MenuBar = styled.nav`
  display: flex;
  align-items: center;
  height: 28px;
  padding: 0 10px 4px 13px;
`;

const FileMenu = styled.button`
  display: flex;
  align-items: center;
  gap: 4px;
  padding-right: 8px;
  border-right: 1px solid #ddd6cf;
  font-size: 10px;
`;

const QuickTools = styled.div`
  display: flex;
  padding: 0 5px;
  border-right: 1px solid #ddd6cf;
`;

const MenuItems = styled.div`
  display: flex;
  gap: 16px;
  padding-left: 12px;
`;

const MenuItem = styled.button`
  height: 20px;
  border-bottom: 1px solid transparent;
  white-space: nowrap;

  ${props => props.$active && `
    color: #0b7d66;
    font-weight: 700;
    border-color: #0b7d66;
  `}
`;

const ShareButton = styled.button`
  display: flex;
  align-items: center;
  justify-content: center;
  gap: 3px;
  width: 45px;
  height: 20px;
  border-radius: 3px;
  color: #fff;
  font-size: 10px;
  background: #079a81;
`;

const Ribbon = styled.section`
  display: flex;
  flex: none;
  height: 59px;
  margin: 0 10px;
  padding: 3px 0;
  border-radius: 6px;
  background: #fff;
  box-shadow: 0 0 3px #b9b2ab;
`;

const RibbonGroup = styled.div`
  display: flex;
  gap: 8px;
  padding: 0 ${props => props.$right}px 0 ${props => props.$left}px;
  border-right: 1px solid #eee;

  &:first-child {
    gap: 11px;
  }

  &:last-child {
    border: 0;
  }
`;

const BigTool = styled.button`
  display: flex;
  flex-direction: column;
  align-items: center;
  justify-content: space-between;
  padding: 8px 0;
  font-size: 10px;
  color: ${props => (props.$dim ? "#b9b9b9" : "#222")};
`;

const ToolLabel = styled.span`
  display: flex;
  align-items: center;
  white-space: nowrap;
`;

const Abc = styled.span`
  display: flex;
  flex-direction: column;
  align-items: center;
  line-height: 10px;
`;

const ToolStack = styled.div`
  display: flex;
  flex-direction: column;
  gap: 8px;
  padding-top: 7px;
`;

const SmallTool = styled.button`
  display: flex;
  align-items: center;
  gap: 3px;
  height: 15px;
  white-space: nowrap;
  font-size: 10px;
  color: ${props => (props.$dim ? "#b9b9b9" : "#222")};
`;

const Caret = () => <Glyph d={icons.down} size={9} weight={2} />;

const Hanzi = styled.span`
  width: 13px;
  font-size: 12px;
`;

const Workspace = styled.div`
  display: flex;
  flex: 1;
  min-height: 0;
`;

const Editor = styled.div`
  display: flex;
  flex-direction: column;
  flex: 1;
  min-width: 0;
`;

const FormulaRow = styled.div`
  display: flex;
  gap: 8px;
  padding: 6px 10px;
`;

const FieldBox = styled.div`
  display: flex;
  align-items: center;
  height: 22px;
  border: 1px solid #dedad6;
  border-radius: 3px;
  background: #fff;
`;

const NameBox = styled(FieldBox)`
  width: 130px;
  padding-right: 3px;
`;

const NameInput = styled.input`
  flex: 1;
  min-width: 0;
  text-align: center;
`;

const FormulaBox = styled(FieldBox)`
  flex: 1;
  gap: 12px;
  padding-left: 17px;
`;

const Fx = styled.i`
  font: italic 14px/14px "Liberation Serif", serif;
`;

const FormulaInput = styled.input`
  flex: 1;
`;

const SheetArea = styled.div`
  display: flex;
  flex: 1;
  min-height: 0;
  overflow: hidden;
  background: #fff;
`;

const Sheet = styled.table`
  flex: 1;
  width: 100%;
  height: max-content;
  table-layout: fixed;
  border-collapse: separate;
  border-spacing: 0;
`;

const Col = styled.col`
  width: ${props => props.$width}px;
`;

const Corner = styled.td`
  height: 15px;
  padding: 0 10px 0 0;
  text-align: right;
  line-height: 10px;
`;

const ColHead = styled.th`
  height: 15px;
  padding: 0;
  border-left: 1px solid #ececec;
  color: ${props => (props.$active ? "#0b8a70" : "#555")};
  font-weight: ${props => (props.$active ? 700 : 400)};
  line-height: 14px;
  background: ${props => (props.$active ? "#e6e6e6" : "#fff")};
  box-shadow: ${props => (props.$active ? "inset 0 -1px #7dbb58" : "none")};
`;

const Row = styled.tr`
  height: ${props => props.$height}px;
`;

const RowHead = styled.th`
  padding: 0;
  border-top: 1px solid #ececec;
  color: #555;
  font-weight: 400;
  line-height: 13px;
`;

const Cell = styled.td`
  padding: 0 2px;
  border: 0 solid ${DARK};
  border-top: 1px solid ${props => props.$top || (props.$fill ? "transparent" : FAINT)};
  border-left: 1px solid ${props => props.$left || (props.$fill ? "transparent" : FAINT)};
  border-right-width: ${props => (props.$end ? 1 : 0)}px;
  background: ${props => props.$fill || "#fff"};
  color: #111;
  font-family: "Liberation Serif", "Noto Sans CJK SC", serif;
  font-size: ${props => (props.$title ? 25 : 12)}px;
  font-weight: ${props => (props.$bold ? 700 : 300)};
  line-height: ${props => (props.$title ? 28 : 13)}px;
  text-align: ${props => props.$align};
  vertical-align: ${props => (props.$merged ? "middle" : "bottom")};
  white-space: nowrap;
`;

const VScroll = styled.div`
  display: flex;
  flex-direction: column;
  align-items: center;
  gap: 7px;
  width: 14px;
  margin-top: 15px;
  padding: 6px 0;
  background: #fff8f0;
`;

const Tick = styled.div`
  width: 7px;
  height: 1px;
  background: #aaa;
`;

const VThumb = styled.div`
  width: 7px;
  height: 55px;
  margin: 68px 0 auto;
  border-radius: 4px;
  background: #dcd7d0;
`;

const SideBar = styled.aside`
  display: flex;
  flex-direction: column;
  align-items: center;
  width: 45px;
  padding-top: 10px;
`;

const SideButton = styled.button`
  display: flex;
  align-items: center;
  height: 32px;
  color: ${props => (props.$dim ? "#b5b0ab" : "#333")};

  &:first-child {
    height: 20px;
  }
`;

const SheetTabs = styled.div`
  display: flex;
  align-items: center;
  flex: none;
  height: 21px;
  border-bottom: 1px solid #e8e3da;
  background: #fffbf1;
`;

const SheetNav = styled.div`
  display: flex;
  padding: 0 3px 0 6px;
`;

const SheetTab = styled.button`
  width: 51px;
  height: 20px;
  border-radius: 0 0 4px 4px;
  color: ${props => (props.$active ? "#0b7d66" : "#333")};
  font-weight: ${props => (props.$active ? 700 : 400)};
  font-size: 10px;
  background: ${props => (props.$active ? "#fff" : "transparent")};
`;

const HScroll = styled.div`
  display: flex;
  align-items: center;
  gap: 10px;
  width: 38%;
  margin-right: 60px;
`;

const Bar = styled.div`
  width: 1px;
  height: 6px;
  background: #888;
`;

const HTrack = styled.div`
  flex: 1;
  padding: 0 17% 0 9%;
`;

const HThumb = styled.div`
  height: 6px;
  border-radius: 3px;
  background: #e3dcd4;
`;

const StatusBar = styled.footer`
  display: flex;
  align-items: center;
  flex: none;
  height: 19px;
  padding: 0 179px 0 12px;
  background: #fffcf3;
`;

const ReadButton = styled.button`
  display: flex;
  align-items: center;
  gap: 2px;
  margin: 0 17px 0 10px;
`;

const ViewButton = styled.button`
  display: flex;
  align-items: center;
  justify-content: center;
  width: 19px;
  height: 19px;
  margin-right: 7px;
  border-radius: 3px;
  background: ${props => (props.$active ? "#e6dfd7" : "transparent")};
`;

const ZoomButton = styled.button`
  display: flex;
  align-items: center;
  gap: 6px;
  margin-left: 13px;
  font-size: 10px;
`;

const TaskBar = styled.footer`
  display: grid;
  grid-template-columns: 1fr auto 1fr;
  align-items: center;
  flex: none;
  height: 38px;
  padding-left: 6px;
  background: linear-gradient(90deg, #fdf5e0, #fffae3 25%, #fff3e0 70%, #fdf6e6);
`;

const Weather = styled.div`
  display: flex;
  align-items: center;
  gap: 6px;
  padding-left: 11px;
  font-size: 10px;
  line-height: 13px;
`;

const Muted = styled.span`
  color: #6f6758;
`;

const Dock = styled.div`
  display: flex;
  align-items: center;
  gap: 10px;
`;

const SearchPill = styled.div`
  display: flex;
  align-items: center;
  gap: 7px;
  width: 175px;
  height: 26px;
  padding-left: 8px;
  overflow: hidden;
  border: 1px solid #eae2d4;
  border-radius: 13px;
  background: #fff;
`;

const SearchInput = styled.input`
  flex: 1;
  min-width: 0;

  &::placeholder {
    color: #555;
    opacity: 1;
  }
`;

const DockIcons = styled.div`
  display: flex;
  align-items: center;
  gap: 16px;
`;

const RunningApp = styled.button`
  display: flex;
  align-items: center;
  justify-content: center;
  width: 31px;
  height: 30px;
  border-radius: 4px;
  background: linear-gradient(#0d6fc8, #0d6fc8) center bottom / 13px 2px no-repeat #fffdfa;
`;

const Tray = styled.div`
  display: flex;
  align-items: center;
  justify-content: flex-end;
  gap: 8px;
  padding-right: 15px;
`;

const TrayGroup = styled.div`
  display: flex;
  align-items: center;
  justify-content: space-around;
  gap: 6px;
  min-width: 20px;

  & + & {
    margin-left: 3px;
  }
`;

const SyncIcon = styled.span`
  display: flex;
  background: radial-gradient(circle at 10px 10px, #0f74cc 3px, transparent 4px);
`;

const Clock = styled.time`
  font-size: 10px;
  line-height: 13px;
  text-align: right;
`;

const Badge = styled.span`
  width: 13px;
  height: 13px;
  border-radius: 50%;
  color: #fff;
  font-size: 9px;
  line-height: 13px;
  text-align: center;
  background: #0d74cf;
`;

const InputMethod = styled.div`
  position: absolute;
  right: 1px;
  bottom: 38px;
  display: flex;
  align-items: center;
  justify-content: space-between;
  width: 180px;
  height: 21px;
  padding-right: 3px;
  border: 1px solid #cfe0f2;
  border-left: 0;
  color: #1670cd;
  background: linear-gradient(90deg, transparent 12px, #fffdf8 12px);

  b {
    font-size: 12px;
  }
`;

const Timer = styled.div`
  position: absolute;
  top: 265px;
  right: 66px;
  width: 38px;
  height: 38px;
  border: 1px solid #fff;
  border-radius: 50%;
  color: #fff;
  font-size: 12px;
  line-height: 36px;
  text-align: center;
  background: radial-gradient(ellipse 22px 10px at 60% 0, #348ee9 95%, transparent), linear-gradient(#62c4f3, #63dcf4);
`;

const CellCursor = styled.svg`
  position: absolute;
  top: 300px;
  left: 503px;
`;

export default App;
